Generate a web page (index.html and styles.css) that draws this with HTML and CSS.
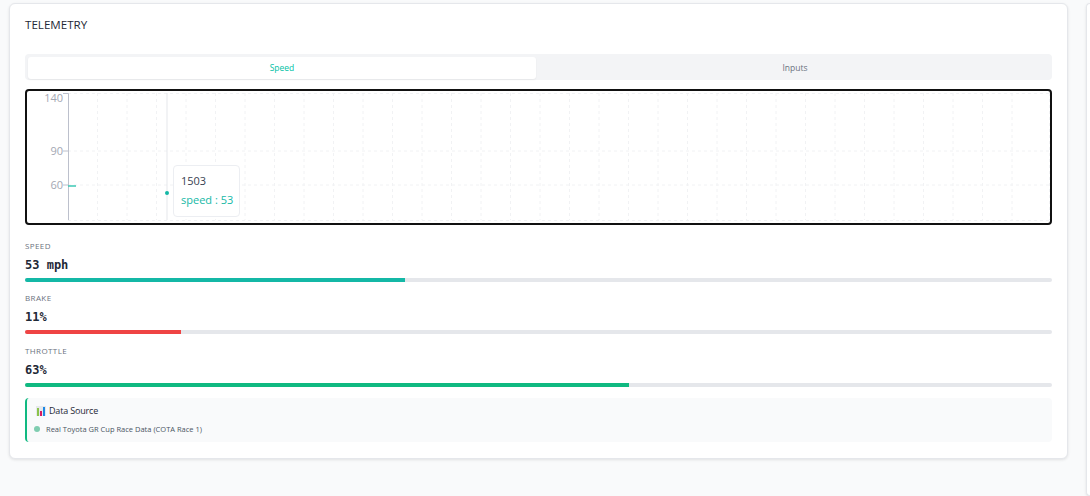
FILE: index.html
```html
<!DOCTYPE html>
<html lang="en">
<head>
    <meta charset="UTF-8">
    <meta name="viewport" content="width=device-width, initial-scale=1.0">
    <title>Telemetry</title>
    <link rel="stylesheet" href="styles.css">
</head>
<body>
    <div class="page">
        <section class="card">
            <h2 class="card-title">TELEMETRY</h2>
            <div class="tabs">
                <div class="tab active">Speed</div>
                <div class="tab">Inputs</div>
            </div>
            <div class="chart">
                <svg class="chart-svg" width="1023" height="131" viewBox="0 0 1023 131">
                    <path class="grid" d="M41 2.500H1022M41 60H1022M41 94H1022M41 129.500H1022"/>
                    <path class="grid" d="M70.500 2V129M100 2V129M129.500 2V129M159 2V129M188.500 2V129M218 2V129M247.500 2V129M277 2V129M306.500 2V129M336 2V129M365.500 2V129M395 2V129M424.500 2V129M454 2V129M483.500 2V129M513 2V129M542.500 2V129M572 2V129M601.500 2V129M631 2V129M660.500 2V129M690 2V129M719.500 2V129M749 2V129M778.500 2V129M808 2V129M837.500 2V129M867 2V129M896.500 2V129M926 2V129M955.500 2V129M985 2V129M1022.500 2V129"/>
                    <path class="axis" d="M36 2.500H41.500V129M36 60H41.500M36 94H41.500"/>
                    <text class="tick" x="36" y="11" text-anchor="end">140</text>
                    <text class="tick" x="36" y="64" text-anchor="end">90</text>
                    <text class="tick" x="36" y="98" text-anchor="end">60</text>
                    <path class="cursor" d="M140 2V129"/>
                    <path class="line" d="M41 95H49"/>
                    <circle class="dot" cx="140" cy="102" r="2"/>
                </svg>
                <div class="tooltip">
                    <div class="tooltip-label">1503</div>
                    <div class="tooltip-value">speed : 53</div>
                </div>
            </div>
            <div class="metric">
                <div class="metric-label">SPEED</div>
                <div class="metric-value">53 mph</div>
                <div class="bar"><div class="bar-fill speed" style="width: 37%"></div></div>
            </div>
            <div class="metric">
                <div class="metric-label">BRAKE</div>
                <div class="metric-value">11%</div>
                <div class="bar"><div class="bar-fill brake" style="width: 15.2%"></div></div>
            </div>
            <div class="metric">
                <div class="metric-label">THROTTLE</div>
                <div class="metric-value">63%</div>
                <div class="bar"><div class="bar-fill throttle" style="width: 58.8%"></div></div>
            </div>
            <div class="source">
                <div class="source-title">
                    <svg class="source-icon" width="10" height="10" viewBox="0 0 10 10">
                        <rect width="10" height="10" fill="#e6e8ec"/>
                        <rect x="1" y="2" width="2" height="8" fill="#8bc34a"/>
                        <rect x="4" y="5" width="2" height="5" fill="#d81b60"/>
                        <rect x="7" y="1" width="2" height="9" fill="#1e88e5"/>
                    </svg>
                    Data Source
                </div>
                <div class="source-row">
                    <span class="source-dot"></span>
                    <span class="source-text">Real Toyota GR Cup Race Data (COTA Race 1)</span>
                </div>
            </div>
        </section>
        <section class="card-next"></section>
    </div>
</body>
</html>
```

FILE: styles.css
```css
* {
    margin: 0;
    padding: 0;
    box-sizing: border-box;
}

html,
body {
    height: 100%;
    overflow: hidden;
}

body {
    font-family: 'Open Sans', sans-serif;
    background: #f9fafb;
    color: #1f2937;
}

.page {
    display: flex;
    align-items: flex-start;
    gap: 18px;
    padding: 3px 0 0 9px;
}

.card {
    width: 1059px;
    height: 456px;
    flex-shrink: 0;
    padding: 13px 15px;
    background: #fff;
    border: 1px solid #e5e7eb;
    border-radius: 6px;
    box-shadow: 0 1px 3px rgba(0, 0, 0, 0.1);
}

.card-next {
    flex: 1;
    height: 493px;
    background: #fff;
    border: 1px solid #e5e7eb;
    border-right: none;
    border-radius: 6px 0 0 6px;
    box-shadow: 0 1px 3px rgba(0, 0, 0, 0.1);
}

.card-title {
    font-size: 11.6px;
    font-weight: 400;
    line-height: 16px;
    margin-bottom: 21px;
}

.tabs {
    display: grid;
    grid-template-columns: 1fr 1fr;
    gap: 5px;
    height: 26px;
    padding: 3px;
    background: #f3f4f6;
    border-radius: 4px;
}

.tab {
    font-size: 8.5px;
    line-height: 22px;
    text-align: center;
    color: #6b7280;
    border-radius: 3px;
}

.tab.active {
    background: #fff;
    color: #00bfa5;
    box-shadow: 0 1px 2px rgba(0, 0, 0, 0.06);
}

.chart {
    position: relative;
    height: 136px;
    margin-top: 9px;
    margin-bottom: 15px;
    border: 2px solid #111;
    border-radius: 4px;
}

.chart-svg {
    display: block;
}

.grid {
    fill: none;
    stroke: #f1f2f4;
    stroke-dasharray: 3 3;
}

.axis {
    fill: none;
    stroke: #bcc0cc;
}

.tick {
    font-size: 11px;
    fill: #a3a7b3;
}

.cursor {
    stroke: #e5e7eb;
}

.line {
    stroke: #3cc8b4;
    stroke-width: 1.5;
}

.dot {
    fill: #14b8a6;
}

.tooltip {
    position: absolute;
    left: 146px;
    top: 74px;
    width: 67px;
    height: 52px;
    padding: 7px;
    background: #fff;
    border: 1px solid #eceef2;
    border-radius: 4px;
    font-size: 11px;
}

.tooltip-label {
    line-height: 16px;
    color: #374151;
    margin-bottom: 3px;
}

.tooltip-value {
    line-height: 16px;
    color: #14b8a6;
    white-space: nowrap;
}

.metric {
    height: 52.4px;
}

.metric-label {
    font-size: 8px;
    line-height: 12px;
    letter-spacing: 0.05em;
    color: #6b7280;
}

.metric-value {
    font-family: 'DejaVu Sans Mono', monospace;
    font-size: 12px;
    font-weight: 700;
    line-height: 14px;
    margin-top: 6px;
    color: #1f2937;
}

.bar {
    height: 4px;
    margin-top: 6px;
    background: #e5e7eb;
    border-radius: 2px;
    overflow: hidden;
}

.bar-fill {
    height: 100%;
}

.speed {
    background: #14b8a6;
}

.brake {
    background: #ef4444;
}

.throttle {
    background: #10b981;
}

.source {
    height: 44px;
    margin-top: 1px;
    padding: 6px 9px;
    background: #f9fafb;
    border-left: 2px solid #10b981;
    border-radius: 4px;
}

.source-title {
    display: flex;
    align-items: center;
    gap: 3px;
    font-size: 9px;
    letter-spacing: -0.02em;
    line-height: 14px;
    color: #1f2937;
}

.source-icon {
    flex-shrink: 0;
}

.source-row {
    display: flex;
    align-items: center;
    gap: 6px;
    margin-top: 5px;
    margin-left: -2px;
}

.source-dot {
    width: 6px;
    height: 6px;
    border-radius: 50%;
    background: #7fcdb0;
}

.source-text {
    font-size: 7.5px;
    line-height: 12px;
    color: #4b5563;
}
```
